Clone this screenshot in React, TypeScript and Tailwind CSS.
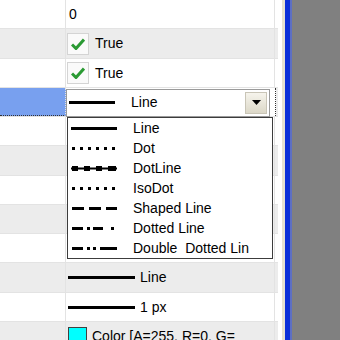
import React from "react";

type Seg = [number, number];

const styles: { name: string; segs: Seg[]; dots?: Seg[] }[] = [
    { name: "Line", segs: [[0, 46]] },
    { name: "Dot", segs: [[1, 4], [9, 12], [17, 20], [25, 28], [33, 36], [41, 44]] },
    { name: "DotLine", segs: [[0, 46]], dots: [[1, 7], [13, 19], [25, 31], [37, 45]] },
    { name: "IsoDot", segs: [[1, 4], [9, 12], [17, 20], [25, 28], [33, 36], [41, 44]] },
    { name: "Shaped Line", segs: [[1, 13], [18, 30], [35, 46]] },
    { name: "Dotted Line", segs: [[1, 12], [16, 19], [22, 32], [40, 43]] },
    { name: "Double  Dotted Lin", segs: [[1, 12], [16, 19], [22, 25], [29, 46]] },
];

function Sample({ segs, dots }: { segs: Seg[]; dots?: Seg[] }) {
    return (
        <svg width="46" height="7" viewBox="0 0 46 7" className="shrink-0">
            {segs.map(([a, b], i) => (
                <rect key={i} x={a} y={dots ? 2.5 : 2} width={b - a} height={dots ? 2 : 3} fill="#000" />
            ))}
            {dots?.map(([a, b], i) => (
                <rect key={"d" + i} x={a} y={1} width={b - a} height={5} fill="#000" />
            ))}
        </svg>
    );
}

function Check() {
    return (
        <div className="flex h-[22px] w-[22px] shrink-0 items-center justify-center border border-[#d4d4d4] bg-[#fafafa]">
            <svg width="14" height="12" viewBox="0 0 14 12">
                <path d="M1 6.5 L5 10.5 L13 1.5" stroke="#2a9a33" strokeWidth="3" fill="none" />
            </svg>
        </div>
    );
}

const rowHeights = ["h-[29px]", "h-[30px]", "h-[29px]", "h-[29px]", "h-[29px]", "h-[30px]", "h-[29px]", "h-[29px]", "h-[29px]", "h-[30px]", "h-[29px]", "h-[29px]"];

export default function App() {
    const cells: React.ReactNode[] = [
        <span className="pl-[3px]">0</span>,
        <div className="flex items-center gap-[6px] pl-[1px]"><Check /><span>True</span></div>,
        <div className="flex items-center gap-[6px] pl-[1px]"><Check /><span>True</span></div>,
        null,
        null, null, null, null, null,
        <div className="flex items-center gap-[5px] pl-[2px]"><div className="h-[3px] w-[67px] bg-black" /><span>Line</span></div>,
        <div className="flex items-center gap-[5px] pl-[2px]"><div className="h-[3px] w-[67px] bg-black" /><span>1 px</span></div>,
        <div className="flex items-start gap-[5px] self-start pl-[2px] pt-[4px]"><div className="mt-[1px] h-[16px] w-[19px] border border-[#404040] bg-[#00ffff]" /><span className="leading-[20px] whitespace-nowrap">Color [A=255, R=0, G=</span></div>,
    ];

    return (
        <div className="flex h-[340px] w-[340px] overflow-hidden bg-white text-[14px] text-black [font-family:'Liberation_Sans',Arial,sans-serif]">
            <div className="relative w-[278px] shrink-0">
                {rowHeights.map((h, i) => {
                    const grey = i % 2 === 1;
                    const selected = i === 3;
                    return (
                        <div key={i} className={`flex ${h} border-b border-[#e3e3e3] ${grey ? "bg-[#ececec]" : "bg-white"}`}>
                            <div
                                className={`w-[66px] shrink-0 border-r border-[#e3e3e3] ${selected ? "border-b border-dotted border-b-[#333] bg-[#78a0ef]" : ""}`}
                            />
                            {selected ? (
                                <div className="flex w-[210px] shrink-0 items-center border-r border-dotted border-r-[#333] bg-white pt-[1px]">
                                    <div className="flex h-[28px] w-[204px] items-center border border-[#9a9a9a] bg-white pl-[2px]">
                                        <Sample segs={[[0, 46]]} />
                                        <span className="ml-[16px] flex-1">Line</span>
                                        <div className="mr-[2px] flex h-[22px] w-[22px] items-center justify-center border border-[#c9c5b7] bg-gradient-to-b from-[#f6f4ec] to-[#dcd8c8]">
                                            <svg width="9" height="5" viewBox="0 0 9 5">
                                                <path d="M0 0 H9 L4.5 5 Z" fill="#000" />
                                            </svg>
                                        </div>
                                    </div>
                                </div>
                            ) : (
                                <div className="flex w-[209px] shrink-0 items-center overflow-hidden border-r border-[#e3e3e3]">
                                    {cells[i]}
                                </div>
                            )}
                        </div>
                    );
                })}

                <div className="absolute left-[67px] top-[117px] w-[206px] border border-[#3c3c3c] bg-white">
                    {styles.map((s) => (
                        <div key={s.name} className="flex h-[20px] items-center pl-[3px]">
                            <Sample segs={s.segs} dots={s.dots} />
                            <span className="ml-[16px] whitespace-pre">{s.name}</span>
                        </div>
                    ))}
                </div>
            </div>
            <div className="w-[4px] bg-white" />
            <div className="w-[3px] bg-[#e6e2d0]" />
            <div className="w-[5px] bg-[#0b2fd8]" />
            <div className="w-[2px] bg-[#5d6fc4]" />
            <div className="flex-1 bg-[#808080]" />
        </div>
    );
}
